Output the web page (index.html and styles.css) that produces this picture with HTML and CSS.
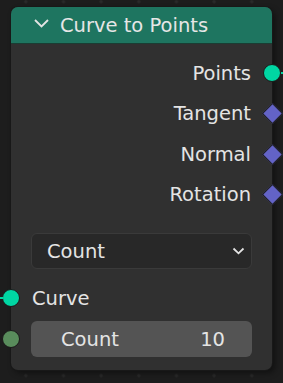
FILE: index.html
```html
<!DOCTYPE html>
<html lang="en">
<head>
  <meta charset="UTF-8" />
  <title>Curve to Points</title>
  <link rel="stylesheet" href="styles.css">
</head>
<body>
  <div class="node">
    <div class="node-header">
      <svg class="collapse" width="15" height="9" viewBox="0 0 15 9">
        <path d="M1 1 L7.5 7.5 L14 1" fill="none" stroke="#e4e4e4" stroke-width="1.8" />
      </svg>
      <span class="title">Curve to Points</span>
    </div>

    <div class="node-body">
      <div class="row output">
        <span>Points</span>
        <i class="socket circle geo link-out"></i>
      </div>
      <div class="row output">
        <span>Tangent</span>
        <i class="socket diamond"></i>
      </div>
      <div class="row output">
        <span>Normal</span>
        <i class="socket diamond"></i>
      </div>
      <div class="row output">
        <span>Rotation</span>
        <i class="socket diamond"></i>
      </div>

      <div class="select">
        <span>Count</span>
        <svg width="13" height="8" viewBox="0 0 13 8">
          <path d="M1.5 1.5 L6.5 6.3 L11.5 1.5" fill="none" stroke="#e4e4e4" stroke-width="1.8" />
        </svg>
      </div>

      <div class="row input">
        <i class="socket circle geo link-in"></i>
        <span>Curve</span>
      </div>
      <div class="row field-row">
        <i class="socket circle int"></i>
        <div class="field">
          <span>Count</span>
          <span>10</span>
        </div>
      </div>
    </div>
  </div>
</body>
</html>
```

FILE: styles.css
```css
body {
  margin: 0;
  width: 283px;
  height: 383px;
  overflow: hidden;
  background-color: #1d1d1d;
  background-image: radial-gradient(circle, #2a2a2a 1.4px, transparent 1.8px);
  background-size: 37.67px 37.4px;
  background-position: 7px -17px;
  font-family: "DejaVu Sans", sans-serif;
  font-size: 19.5px;
  color: #e4e4e4;
}

.node {
  margin: 7px 0 0 11px;
  width: 261px;
  background: #303030;
  border-radius: 7px;
  box-shadow: 0 0 0 1px #181818, 3px 3px 6px rgba(0, 0, 0, 0.45);
}

.node-header {
  height: 36px;
  display: flex;
  align-items: center;
  padding-left: 23px;
  background: #1e7560;
  border-radius: 7px 7px 0 0;
  border-bottom: 1px solid #1a3d33;
}
.collapse {
  margin-right: 11px;
  margin-top: -3px;
}
.title {
  color: #e6e6e6;
}

.node-body {
  padding: 9px 0 13px;
}

.row {
  position: relative;
  height: 40.5px;
  display: flex;
  align-items: center;
}
.output {
  justify-content: flex-end;
  padding-right: 21px;
}
.input {
  height: 40px;
  margin-top: 9px;
  padding-left: 21px;
}
.field-row {
  height: 36px;
  margin-top: 3px;
}

/* sockets sit on the node edge */
.socket {
  position: absolute;
  top: 50%;
  box-sizing: border-box;
}
.circle {
  width: 18px;
  height: 18px;
  margin-top: -9px;
  border-radius: 50%;
  border: 1.5px solid #1a1a1a;
}
.output .socket {
  right: -9px;
}
.input .socket, .field-row .socket {
  left: -9px;
}
.geo {
  background: #00d6a3;
}
.int {
  background: #598c5c;
}
.diamond {
  width: 15px;
  height: 15px;
  margin-top: -7.5px;
  right: -7.5px !important;
  background: #6363c7;
  border: 1px solid #1a1a1a;
  transform: rotate(45deg);
}
.link-out::after, .link-in::after {
  content: "";
  position: absolute;
  top: 6.5px;
  width: 4px;
  height: 2px;
  background: #00d6a3;
}
.link-out::after {
  left: 16.5px;
}
.link-in::after {
  right: 16.5px;
}

.select {
  margin: 18px 20px 0 20px;
  height: 34px;
  display: flex;
  align-items: center;
  justify-content: space-between;
  padding: 0 6px 0 15px;
  background: #282828;
  border: 1px solid #3a3a3a;
  border-radius: 6px;
}

.field {
  margin: 0 20px;
  flex: 1;
  height: 36px;
  display: flex;
  align-items: center;
  justify-content: space-between;
  padding: 0 27px 0 30px;
  background: #545454;
  border-radius: 6px;
}
```
